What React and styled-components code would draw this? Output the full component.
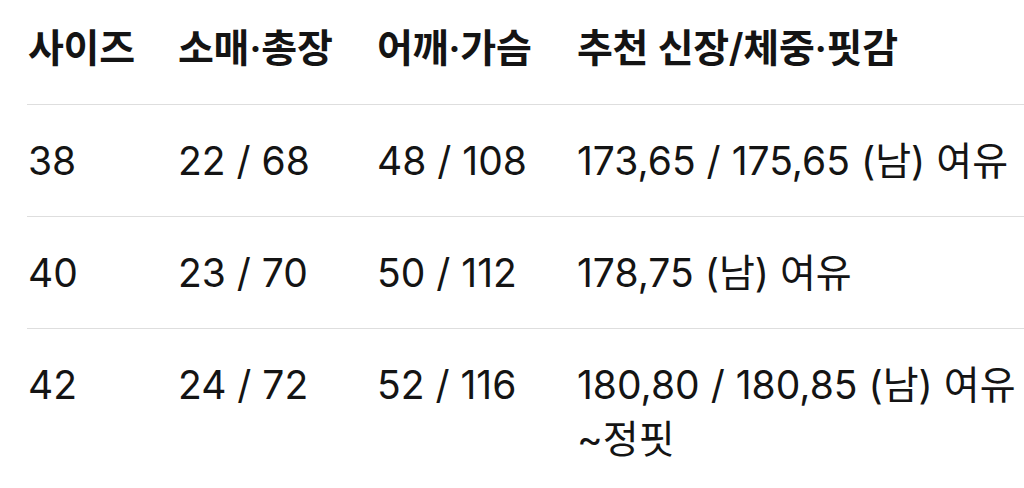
import React from "react";
import styled, { createGlobalStyle } from "styled-components";

const Global = createGlobalStyle`
  html, body { margin: 0; padding: 0; background: #fff; }
  body { font-family: "Inter", "Noto Sans CJK KR", sans-serif; color: #141414; }
`;

const Table = styled.div`
  margin-left: 27px;
  display: grid;
  grid-template-columns: 151px 199px 200px 1fr;
  font-size: 39px;
  line-height: 54px;
`;

const Cell = styled.div`
  padding: ${(p) => (p.$head ? "21px 0 29px" : "29px 0 28px")};
  padding-left: ${(p) => (p.$first ? "1px" : "0")};
  font-weight: ${(p) => (p.$head ? 600 : 400)};
  letter-spacing: ${(p) => (p.$head ? "-0.3px" : "0")};
  border-bottom: ${(p) => (p.$last ? "none" : "1.5px solid #dedede")};
  white-space: ${(p) => (p.$wrap ? "normal" : "nowrap")};
  word-break: keep-all;
`;

const head = ["사이즈", "소매·총장", "어깨·가슴", "추천 신장/체중·핏감"];
const rows = [
  ["38", "22 / 68", "48 / 108", "173,65 / 175,65 (남) 여유"],
  ["40", "23 / 70", "50 / 112", "178,75 (남) 여유"],
  ["42", "24 / 72", "52 / 116", "180,80 / 180,85 (남) 여유 ~정핏"],
];

export default function App() {
  return (
    <>
      <Global />
      <Table>
        {head.map((h, i) => (
          <Cell key={h} $head $first={i === 0}>{h}</Cell>
        ))}
        {rows.map((r, ri) =>
          r.map((c, ci) => (
            <Cell
              key={ri + "-" + ci}
              $first={ci === 0}
              $wrap={ci === 3}
              $last={ri === rows.length - 1}
            >
              {c}
            </Cell>
          ))
        )}
      </Table>
    </>
  );
}
